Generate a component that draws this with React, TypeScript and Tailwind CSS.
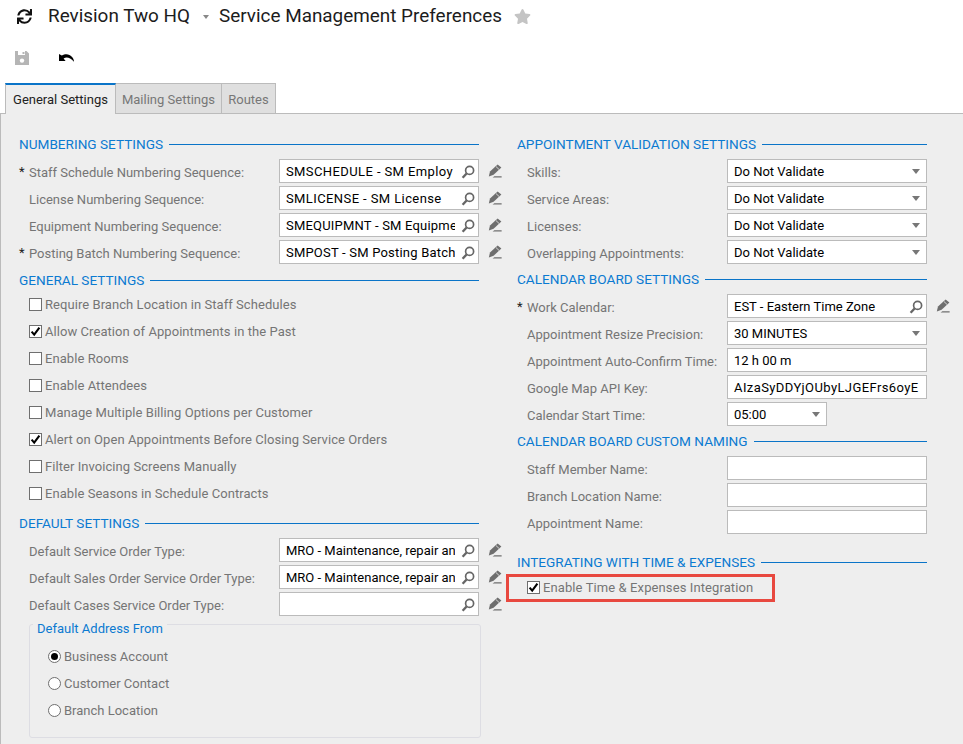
import { FaStar, FaSync } from "react-icons/fa";

const labelCls = "text-[13px] leading-none text-[#757575]";

function SearchIcon() {
  return (
    <svg viewBox="0 0 14 14" className="h-[14px] w-[14px] shrink-0" fill="none" stroke="#666" strokeWidth="1.7">
      <circle cx="8.6" cy="5.4" r="4" />
      <path d="M5.6 8.4 1.6 12.8" strokeWidth="2.3" />
    </svg>
  );
}

function PencilIcon() {
  return (
    <svg viewBox="0 0 14 14" className="h-[14px] w-[14px] shrink-0" fill="#6e6e6e">
      <path d="M9.6.6 13.4 3.6 5.6 10.8 .8 12.4 2 7.6Z" />
      <path d="M6.4 12.2H13.6V13.4H4.6Z" />
      <path d="M8 2.6 11 5.4" stroke="#eeeeee" strokeWidth="0.8" />
    </svg>
  );
}

function SaveIcon() {
  return (
    <svg viewBox="0 0 14 14" className="h-[14px] w-[14px]" fill="#b5b5b5">
      <path d="M0 0H3V4H10V0H11.5L14 2.5V14H0Z" />
      <path d="M7.5 1H9.5V3H7.5Z" />
      <circle cx="7" cy="9.6" r="2.2" fill="#ffffff" />
    </svg>
  );
}

function Caret() {
  return <span className="h-0 w-0 border-x-[4.5px] border-t-[5px] border-x-transparent border-t-[#777]" />;
}

function Heading({ text, className = "" }: { text: string; className?: string }) {
  return (
    <div className={`flex h-[22px] items-center gap-[6px] ${className}`}>
      <span className="pt-px text-[13.6px] leading-none whitespace-nowrap text-[#0b7ad1]">{text}</span>
      <span className="mt-px h-px flex-1 bg-[#0a74c8]" />
    </div>
  );
}

function Row({
  label,
  required,
  width,
  children,
  pencil,
  fieldWidth = "w-[200px]",
}: {
  label: string;
  required?: boolean;
  width: string;
  children?: React.ReactNode;
  pencil?: boolean;
  fieldWidth?: string;
}) {
  return (
    <div className="flex h-6 items-center">
      <span className="w-[10px] shrink-0 pt-[1px] text-[13px] leading-none text-[#222]">{required ? "*" : ""}</span>
      <span className={`${labelCls} ${width} shrink-0 pt-[2px] whitespace-nowrap`}>{label}</span>
      <div className={`flex h-6 ${fieldWidth} shrink-0 items-center border border-[#bbbbbb] bg-white pt-px pl-[6px] text-[13px] text-black`}>
        {children}
      </div>
      {pencil && (
        <span className="ml-[9px]">
          <PencilIcon />
        </span>
      )}
    </div>
  );
}

function Lookup({ value, tracking = "" }: { value?: string; tracking?: string }) {
  return (
    <>
      <span className={`flex-1 overflow-hidden whitespace-nowrap ${tracking}`}>{value}</span>
      <span className="mr-[3px] ml-[6px] flex">
        <SearchIcon />
      </span>
    </>
  );
}

function Select({ value }: { value: string }) {
  return (
    <>
      <span className="flex-1 whitespace-nowrap">{value}</span>
      <span className="mr-[6px] flex">
        <Caret />
      </span>
    </>
  );
}

function Check({ checked }: { checked?: boolean }) {
  return (
    <span className="flex h-[13px] w-[13px] shrink-0 items-center justify-center border border-[#6f6f6f] bg-white">
      {checked && (
        <svg viewBox="0 0 11 11" className="h-[11px] w-[11px]" fill="none" stroke="#000" strokeWidth="2.1">
          <path d="M1.6 5.6 4.2 8.6 9.4 1.6" />
        </svg>
      )}
    </span>
  );
}

function CheckRow({ label, checked }: { label: string; checked?: boolean }) {
  return (
    <div className="flex h-[27px] items-center gap-[3px] pl-[10px]">
      <Check checked={checked} />
      <span className={`${labelCls} tracking-[0.06px]`}>{label}</span>
    </div>
  );
}

function Radio({ label, checked }: { label: string; checked?: boolean }) {
  return (
    <div className="flex h-[27px] items-center gap-[3px]">
      <span className="flex h-[13px] w-[13px] items-center justify-center rounded-full border border-[#6f6f6f] bg-white">
        {checked && <span className="h-[7px] w-[7px] rounded-full bg-black" />}
      </span>
      <span className={labelCls}>{label}</span>
    </div>
  );
}

const checks: [string, boolean][] = [
  ["Require Branch Location in Staff Schedules", false],
  ["Allow Creation of Appointments in the Past", true],
  ["Enable Rooms", false],
  ["Enable Attendees", false],
  ["Manage Multiple Billing Options per Customer", false],
  ["Alert on Open Appointments Before Closing Service Orders", true],
  ["Filter Invoicing Screens Manually", false],
  ["Enable Seasons in Schedule Contracts", false],
];

export default function App() {
  return (
    <div
      className="flex h-[744px] w-full flex-col overflow-hidden bg-white"
      style={{ fontFamily: "Roboto, sans-serif" }}
    >
      <div className="flex h-8 items-center pl-[17px]">
        <FaSync className="h-[15px] w-[15px] text-[#111]" />
        <span className="ml-[16px] w-[143px] text-[18.9px] leading-none whitespace-nowrap text-[#1c1c1c]">Revision Two HQ</span>
        <span className="mt-[2px] ml-[12px] h-0 w-0 border-x-[3px] border-t-[4px] border-x-transparent border-t-[#888]" />
        <span className="ml-[10px] text-[18.9px] leading-none text-[#1c1c1c]">Service Management Preferences</span>
        <FaStar className="ml-[12px] h-[17px] w-[17px] text-[#c4c4c4]" />
      </div>

      <div className="flex h-[51px] items-center pl-[15px]">
        <SaveIcon />
        <svg viewBox="0 0 16 9" className="ml-[30px] h-[9px] w-[16px]" fill="#000">
          <path d="M0 1V8H6.6L4.6 5.6C7 4 10.6 3.8 15 8.8 15.4 4.8 9.6-1.8 2.8 2.6Z" />
        </svg>
      </div>

      <div className="-mb-px flex h-[31px] pl-[5px] text-[13px] leading-none">
        <div className="z-10 flex w-[111px] items-center justify-center border-x border-t-2 border-x-[#bbb] border-t-[#0a74c8] bg-[#eeeeee] text-[#222]">
          General Settings
        </div>
        <div className="flex w-[106px] items-center justify-center border-t border-r border-[#bbb] bg-[#dfdfdf] pt-px text-[#777]">
          Mailing Settings
        </div>
        <div className="flex w-[54px] items-center justify-center border-t border-r border-[#bbb] bg-[#dfdfdf] pt-px text-[#777]">
          Routes
        </div>
      </div>

      <div className="flex flex-1 border-t border-l border-[#bbb] bg-[#eeeeee] pt-[19px]">
        <div className="ml-[18px] w-[460px]">
          <Heading text="NUMBERING SETTINGS" />
          <div className="mt-1 flex flex-col gap-[3px]">
            <Row required pencil width="w-[250px]" label="Staff Schedule Numbering Sequence:">
              <Lookup tracking="tracking-[0.4px]" value="SMSCHEDULE - SM Employ" />
            </Row>
            <Row pencil width="w-[250px]" label="License Numbering Sequence:">
              <Lookup tracking="tracking-[0.4px]" value="SMLICENSE - SM License" />
            </Row>
            <Row pencil width="w-[250px]" label="Equipment Numbering Sequence:">
              <Lookup tracking="tracking-[0.2px]" value="SMEQUIPMNT - SM Equipme" />
            </Row>
            <Row required pencil width="w-[250px]" label="Posting Batch Numbering Sequence:">
              <Lookup tracking="tracking-[0.2px]" value="SMPOST - SM Posting Batch" />
            </Row>
          </div>

          <Heading text="GENERAL SETTINGS" className="mt-[5px]" />
          <div>
            {checks.map(([label, checked]) => (
              <CheckRow key={label} label={label} checked={checked} />
            ))}
          </div>

          <Heading text="DEFAULT SETTINGS" className="mt-[5px]" />
          <div className="mt-1 flex flex-col gap-[3px]">
            <Row pencil width="w-[250px]" label="Default Service Order Type:">
              <Lookup value="MRO - Maintenance, repair an" />
            </Row>
            <Row pencil width="w-[250px]" label="Default Sales Order Service Order Type:">
              <Lookup value="MRO - Maintenance, repair an" />
            </Row>
            <Row pencil width="w-[250px]" label="Default Cases Service Order Type:">
              <Lookup />
            </Row>
          </div>

          <div className="mt-2 ml-[10px] h-[114px] w-[452px] rounded-[3px] border border-[#dddde3]">
            <div className="mt-[-4px] ml-[3px] w-fit bg-[#eeeeee] px-[4px] text-[13px] leading-[15px] text-[#0b7ad1]">
              Default Address From
            </div>
            <div className="mt-[7px] ml-[18px]">
              <Radio checked label="Business Account" />
              <Radio label="Customer Contact" />
              <Radio label="Branch Location" />
            </div>
          </div>
        </div>

        <div className="ml-[38px] w-[410px]">
          <Heading text="APPOINTMENT VALIDATION SETTINGS" />
          <div className="mt-1 flex flex-col gap-[3px]">
            {["Skills:", "Service Areas:", "Licenses:", "Overlapping Appointments:"].map((label) => (
              <Row key={label} width="w-[200px]" label={label}>
                <Select value="Do Not Validate" />
              </Row>
            ))}
          </div>

          <Heading text="CALENDAR BOARD SETTINGS" className="mt-1" />
          <div className="mt-1 flex flex-col gap-[3px]">
            <div className="w-[433px]">
              <Row required pencil width="w-[200px]" label="Work Calendar:">
                <Lookup value="EST - Eastern Time Zone" />
              </Row>
            </div>
            <Row width="w-[200px]" label="Appointment Resize Precision:">
              <Select value="30 MINUTES" />
            </Row>
            <Row width="w-[200px]" label="Appointment Auto-Confirm Time:">
              12 h 00 m
            </Row>
            <Row width="w-[200px]" label="Google Map API Key:">
              <span className="whitespace-nowrap tracking-[0.4px]">AIzaSyDDYjOUbyLJGEFrs6oyE</span>
            </Row>
            <Row width="w-[200px]" label="Calendar Start Time:" fieldWidth="w-[100px]">
              <Select value="05:00" />
            </Row>
          </div>

          <Heading text="CALENDAR BOARD CUSTOM NAMING" className="mt-1" />
          <div className="mt-1 flex flex-col gap-[3px]">
            <Row width="w-[200px]" label="Staff Member Name:" />
            <Row width="w-[200px]" label="Branch Location Name:" />
            <Row width="w-[200px]" label="Appointment Name:" />
          </div>

          <Heading text="INTEGRATING WITH TIME & EXPENSES" className="mt-[17px]" />
          <div className="mt-px -ml-[11px] flex h-[28px] w-[269px] items-center gap-[3px] border-[3px] border-[#e8483f] pb-[2px] pl-[18px]">
            <Check checked />
            <span className={`${labelCls} tracking-[0.1px]`}>Enable Time &amp; Expenses Integration</span>
          </div>
        </div>
      </div>
    </div>
  );
}
